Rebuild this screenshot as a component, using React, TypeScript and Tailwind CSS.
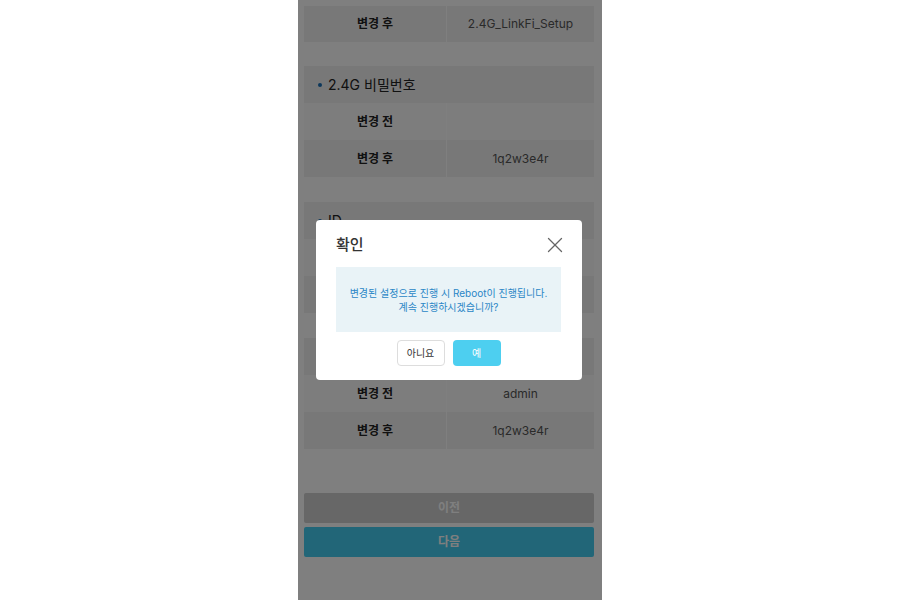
import React from 'react'
import { X } from 'lucide-react'

type Section = { title?: string; before: string; after: string; onlyAfter?: boolean }

const sections: Section[] = [
  { before: '', after: '2.4G_LinkFi_Setup', onlyAfter: true },
  { title: '2.4G 비밀번호', before: '', after: '1q2w3e4r' },
  { title: 'ID', before: 'admin', after: 'admin' },
  { title: '비밀번호', before: 'admin', after: '1q2w3e4r' },
]

function InfoRow({ label, value, light, short }: { label: string; value: string; light?: boolean; short?: boolean }) {
  const bg = light ? 'bg-[#fafafa]' : 'bg-[#f0f0f0]'
  return (
    <div className={`grid grid-cols-[142px_1fr] gap-px ${short ? 'h-[36px]' : 'h-[37px]'}`}>
      <div className={`${bg} flex items-center justify-center text-[12px] font-bold text-[#222]`}>{label}</div>
      <div className={`${bg} flex items-center justify-center text-[12px] text-[#555]`}>{value}</div>
    </div>
  )
}

function App() {
  return (
    <div
      className="min-h-screen bg-white flex justify-center"
      style={{ fontFamily: 'Inter, "Noto Sans CJK KR", sans-serif' }}
    >
      <div className="relative w-[304px] h-[600px] overflow-hidden bg-white">
        {/* settings summary */}
        <div className="pl-[6px] pr-[8px] pt-[6px] flex flex-col">
          {sections.map((s, i) => (
            <div key={i} className={`flex flex-col ${i === 1 ? 'mt-[24px]' : i > 1 ? 'mt-[25px]' : ''}`}>
              {s.title && (
                <div className="h-[37px] bg-[#f0f0f0] flex items-center pl-[14px] gap-[6px] text-[14px] text-[#222]">
                  <span className="w-[4px] h-[4px] rounded-full bg-[#1a6fb5]" />
                  {s.title}
                </div>
              )}
              {!s.onlyAfter && <InfoRow label="변경 전" value={s.before} light />}
              <InfoRow label="변경 후" value={s.after} short={s.onlyAfter} />
            </div>
          ))}
        </div>

        <div className="pl-[6px] pr-[8px] mt-[44px] flex flex-col gap-[4px]">
          <button className="h-[30px] rounded-[2px] bg-[#cecece] text-white text-[12px] font-bold">이전</button>
          <button className="h-[30px] rounded-[2px] bg-[#45cdf0] text-white text-[12px] font-bold">다음</button>
        </div>

        {/* dim + confirm dialog */}
        <div className="absolute inset-0 bg-black/50 flex items-center justify-center pr-[2px]">
          <div className="w-[266px] h-[160px] bg-white rounded-[4px] pl-[20px] pr-[21px] pt-[14px] flex flex-col">
            <div className="flex items-center justify-between h-[22px]">
              <span className="text-[15px] font-medium text-[#333]">확인</span>
              <X size={26} strokeWidth={1.2} className="text-[#666] -mr-[7px]" />
            </div>
            <div className="mt-[11px] h-[65px] bg-[#e9f3f7] flex flex-col items-center justify-center text-[10px] leading-[14px] text-[#2a86c6]">
              <span>변경된 설정으로 진행 시 Reboot이 진행됩니다.</span>
              <span>계속 진행하시겠습니까?</span>
            </div>
            <div className="mt-[8px] flex justify-center gap-[8px]">
              <button className="w-[48px] h-[26px] rounded-[4px] border border-[#ddd] bg-white text-[10px] text-[#333]">아니요</button>
              <button className="w-[48px] h-[26px] rounded-[4px] bg-[#4dcff0] text-[10px] text-white">예</button>
            </div>
          </div>
        </div>
      </div>
    </div>
  )
}

export default App
